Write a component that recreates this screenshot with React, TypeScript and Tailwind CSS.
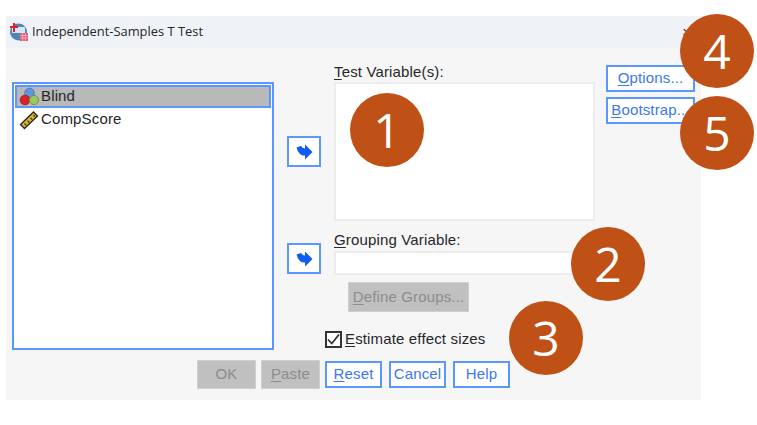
import { ReactNode } from 'react';

const ink = 'text-[#26262b]';
const blueBtn =
  'flex items-center justify-center border-2 border-[#5c96ff] bg-white text-[15px] tracking-[0.15px] text-[#3a78ee]';
const grayBtn =
  'flex items-center justify-center bg-[#c0c0c0] text-[15px] tracking-[0.15px] text-[#8c8c8c] border border-[#cfcfcf]';

function Key({ children }: { children: ReactNode }) {
  return <span className="underline underline-offset-2">{children}</span>;
}

function NominalIcon() {
  return (
    <svg width="20" height="20" viewBox="0 0 20 20" className="shrink-0">
      <circle cx="10.5" cy="6" r="4.8" fill="#5f97dc" stroke="#3f6fb0" strokeWidth="0.8" />
      <circle cx="6" cy="13" r="4.8" fill="#dc2228" stroke="#96181c" strokeWidth="0.8" />
      <circle cx="15" cy="13" r="4.6" fill="#96c95f" stroke="#64913a" strokeWidth="0.8" />
    </svg>
  );
}

function ScaleIcon() {
  return (
    <svg width="20" height="20" viewBox="0 0 20 20" className="shrink-0">
      <path d="M1.5 14.5 14.5 2l4 4L5.5 18.5z" fill="#d9b531" stroke="#2c2a20" strokeWidth="1.4" />
      <path d="M5.5 13.5l1.8 1.8M8.5 10.7l1.8 1.8M11.5 7.9l1.8 1.8M14.5 5.1l1.4 1.4" stroke="#2c2a20" strokeWidth="1.1" />
    </svg>
  );
}

function TitleIcon() {
  return (
    <svg width="20" height="20" viewBox="0 0 20 20" className="shrink-0">
      <circle cx="9.5" cy="10" r="8.5" fill="#4f86b8" />
      <rect x="3" y="5" width="13" height="6" fill="#d9e6f2" />
      <path d="M5 1v9M1 5h8" stroke="#d8232f" strokeWidth="2" />
      <rect x="11" y="11" width="8" height="8" fill="#e35a70" />
      <path d="M11 13.5h8M11 16h8M13.7 11v8M16.3 11v8" stroke="#f7c6cf" strokeWidth="0.7" />
    </svg>
  );
}

function ArrowButton() {
  return (
    <div className="flex h-[31px] w-[34px] items-center justify-center border-2 border-[#5c96ff] bg-white">
      <svg width="17" height="16" viewBox="0 0 17 16">
        <path d="M0.5 3.5 5 2Q7 4.5 9 4.5V0.5L16.5 8 9 15.5V11.5H7Q2.5 10.5 0.5 3.5z" fill="#0f5cf5" />
      </svg>
    </div>
  );
}

function Badge({ n, className }: { n: number; className: string }) {
  return (
    <div
      className={`absolute flex h-[74px] w-[74px] items-center justify-center rounded-full bg-[#c05116] font-['Open_Sans',sans-serif] text-[48px] font-medium text-white ${className}`}
    >
      {n}
    </div>
  );
}

export default function App() {
  return (
    <div className="relative h-[425px] w-[757px] overflow-hidden bg-white pl-[6px] pt-[16px] font-['Liberation_Sans',sans-serif]">
      <div className="h-[384px] w-[695px] bg-[#f6f6f6]">
        <div className="flex h-[32px] items-center gap-[3px] bg-[#eff3f7] pl-[3px] pr-[10px]">
          <TitleIcon />
          <span className={`font-['Open_Sans',sans-serif] text-[12.9px] ${ink}`}>
            Independent-Samples T Test
          </span>
          <span className={`ml-auto text-[15px] ${ink}`}>×</span>
        </div>

        <div className={`flex pl-[6px] text-[15px] tracking-[0.15px] ${ink}`}>
          <div className="mt-[34px] flex h-[268px] w-[262px] flex-col border-2 border-[#5c96ff] bg-white p-px">
            <div className="flex h-[23px] items-center gap-[2px] border-2 border-[#5c96ff] bg-[#b9b9b9] pl-[2px]">
              <NominalIcon />
              Blind
            </div>
            <div className="flex h-[23px] items-center gap-[2px] pl-[4px]">
              <ScaleIcon />
              CompScore
            </div>
          </div>

          <div className="ml-[13px] mt-[88px] flex flex-col gap-[76px]">
            <ArrowButton />
            <ArrowButton />
          </div>

          <div className="ml-[13px] w-[261px]">
            <div className="mt-[15px] h-[19px] leading-[17px]">
              <Key>T</Key>est Variable(s):
            </div>
            <div className="h-[139px] border-2 border-[#ececec] bg-white" />
            <div className="mt-[10px] h-[20px] leading-[18px]">
              <Key>G</Key>rouping Variable:
            </div>
            <div className="h-[24px] border-2 border-[#ececec] bg-white" />
            <div className={`ml-[14px] mt-[7px] h-[30px] w-[121px] ${grayBtn}`}>
              <span>
                <Key>D</Key>efine Groups...
              </span>
            </div>
            <div className="-ml-[9px] mt-[16px] flex items-center gap-[3px]">
              <div className="flex h-[17px] w-[17px] items-center justify-center border-2 border-[#333] bg-white">
                <svg width="13" height="13" viewBox="0 0 13 13">
                  <path d="M1 6.5 4.8 10.5 12 1.5" fill="none" stroke="#333" strokeWidth="1.8" />
                </svg>
              </div>
              <span>
                <Key>E</Key>stimate effect sizes
              </span>
            </div>
          </div>

          <div className="ml-[11px] mt-[17px] flex w-[89px] flex-col gap-[5px]">
            <div className={`h-[27px] ${blueBtn}`}>
              <span>
                <Key>O</Key>ptions...
              </span>
            </div>
            <div className={`h-[27px] ${blueBtn}`}>
              <span>
                <Key>B</Key>ootstrap...
              </span>
            </div>
          </div>
        </div>

        <div className="ml-[191px] mt-[9px] flex items-center gap-[5px]">
          <div className={`h-[29px] w-[59px] ${grayBtn}`}>OK</div>
          <div className={`h-[29px] w-[59px] ${grayBtn}`}>
            <span>
              <Key>P</Key>aste
            </span>
          </div>
          <div className={`h-[27px] w-[57px] ${blueBtn}`}>
            <span>
              <Key>R</Key>eset
            </span>
          </div>
          <div className={`ml-[2px] h-[27px] w-[57px] ${blueBtn}`}>Cancel</div>
          <div className={`ml-[2px] h-[27px] w-[57px] ${blueBtn}`}>Help</div>
        </div>
      </div>

      <Badge n={1} className="left-[350px] top-[93px]" />
      <Badge n={2} className="left-[571px] top-[227px]" />
      <Badge n={3} className="left-[509px] top-[301px]" />
      <Badge n={4} className="left-[680px] top-[14px]" />
      <Badge n={5} className="left-[680px] top-[96px]" />
    </div>
  );
}
